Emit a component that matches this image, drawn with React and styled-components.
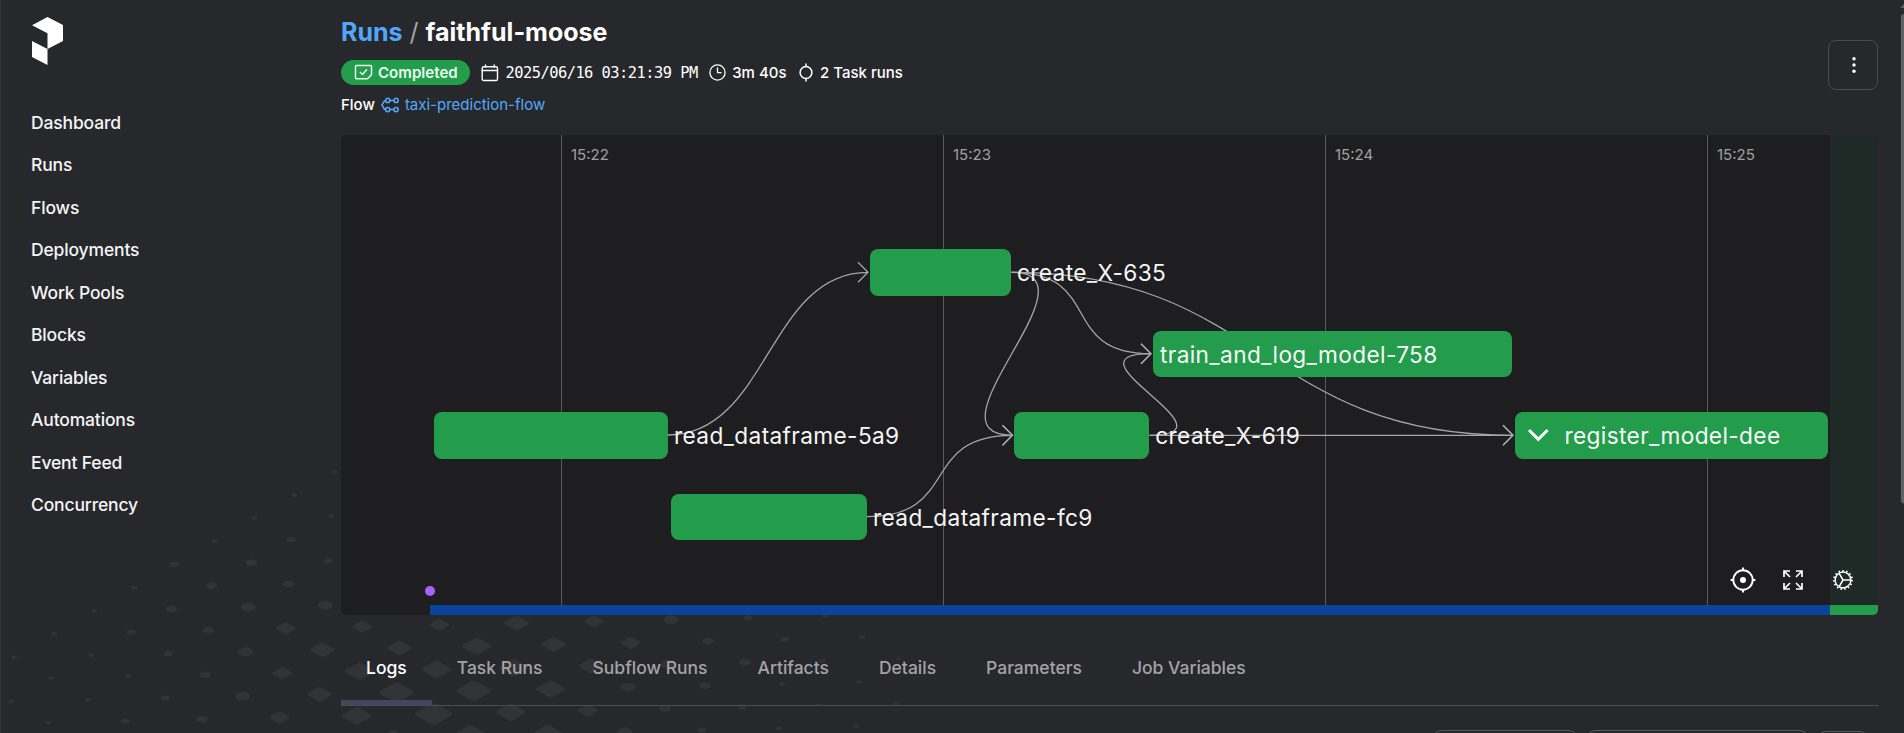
import React from "react";
import styled, { createGlobalStyle, css } from "styled-components";

const c = {
  page: "#27282c",
  canvas: "#1e1e20",
  green: "#239d4c",
  blue: "#0a439b",
  link: "#51a8fb",
  muted: "#a3a3a7",
  rule: "#4b4c50",
  edge: "#a6a6a8",
};

const GlobalStyle = createGlobalStyle`
  *, *::before, *::after { box-sizing: border-box; }
  html, body { margin: 0; height: 100%; overflow: hidden; }
  body { background: ${c.page}; color: #fff; font-family: Inter, "Liberation Sans", sans-serif; }
`;

const Page = styled.div`
  position: relative;
  display: flex;
  width: 100vw;
  height: 100vh;
  overflow: hidden;
  background: ${c.page};
  border-left: 1px solid #323437;
`;

const Pattern = styled.svg`
  position: absolute;
  top: 0;
  left: -1px;
  fill: #323337;
`;

const Sidebar = styled.aside`
  position: relative;
  flex: none;
  width: 320px;
  padding: 17px 30px 0;
`;

const Logo = styled.svg`
  display: block;
  margin-left: 1px;
`;

const Nav = styled.nav`
  display: flex;
  flex-direction: column;
  margin-top: 36.5px;
`;

const NavLink = styled.a`
  height: 42.5px;
  line-height: 42.5px;
  font-size: 17.5px;
  font-weight: 500;
  letter-spacing: -0.15px;
  color: #f5f5f6;
`;

const Main = styled.main`
  position: relative;
  flex: 1;
  min-width: 0;
  display: flex;
  flex-direction: column;
  padding: 17px 26px 0 20px;
`;

const Header = styled.header`
  display: flex;
  align-items: center;
  justify-content: space-between;
  height: 96px;
`;

const HeaderText = styled.div`
  display: flex;
  flex-direction: column;
  height: 100%;
`;

const Title = styled.h1`
  display: flex;
  gap: 7px;
  margin: 0;
  height: 31px;
  line-height: 31px;
  font-size: 25px;
  font-weight: 700;
  letter-spacing: 0;
`;

const Crumb = styled.a`
  color: ${c.link};
`;

const Slash = styled.span`
  color: #a3a3a7;
  font-weight: 400;
`;

const MetaRow = styled.div`
  display: flex;
  align-items: center;
  margin-top: 12px;
  height: 25px;
  gap: 11px;
  font-size: 15px;
  font-weight: 500;
`;

const Badge = styled.span`
  display: flex;
  align-items: center;
  gap: 5px;
  width: 129px;
  height: 25px;
  padding: 0 0 0 13px;
  border-radius: 13px;
  background: ${c.green};
  color: #e9fbef;
  font-size: 15.1px;
  font-weight: 600;
`;

const Meta = styled.span`
  display: flex;
  align-items: center;
  gap: 6.5px;
  white-space: nowrap;
`;

const Stamp = styled.span`
  font: 400 15.4px "DejaVu Sans Mono", monospace;
  letter-spacing: -0.53px;
`;

const FlowRow = styled.div`
  display: flex;
  align-items: center;
  gap: 6px;
  margin-top: 10px;
  height: 20px;
  font-size: 15px;
  font-weight: 500;
`;

const FlowLink = styled.a`
  color: ${c.link};
  font-size: 15px;
  font-weight: 400;
`;

const MenuButton = styled.button`
  display: flex;
  align-items: center;
  justify-content: center;
  width: 50px;
  height: 50px;
  padding: 0 0 0 1px;
  border: 1px solid ${c.rule};
  border-radius: 8px;
  background: transparent;
`;

const Graph = styled.section`
  position: relative;
  flex: none;
  margin-top: 22px;
  height: 480px;
  border-radius: 5px;
  overflow: hidden;
  background: ${c.canvas};
`;

const TimeColumn = styled.div`
  position: absolute;
  top: 0;
  left: ${(p) => p.$x}px;
  height: 470px;
  padding: 10px 0 0 9px;
  border-left: 1px solid #5a595d;
  font-size: 15px;
  line-height: 20px;
  color: #a0a0a3;
`;

const StateBand = styled.div`
  position: absolute;
  top: 0;
  left: 1489px;
  right: 0;
  height: 470px;
  background: #1f2a26;
`;

const StateBar = styled.div`
  position: absolute;
  bottom: 0;
  left: 88.500px;
  right: 0;
  height: 10px;
  display: flex;
`;

const StateSegment = styled.div`
  width: ${(p) => p.$width}px;
  background: ${(p) => p.$color};
`;

const StartMark = styled.div`
  position: absolute;
  left: 84px;
  top: 451px;
  width: 10px;
  height: 10px;
  border-radius: 50%;
  background: #a762fb;
`;

const Edges = styled.svg`
  position: absolute;
  inset: 0;
  fill: none;
  stroke: ${c.edge};
  stroke-width: 1.3;
`;

const Node = styled.div`
  position: absolute;
  left: ${(p) => p.$x}px;
  top: ${(p) => p.$y}px;
  width: ${(p) => p.$width}px;
  height: 46.6px;
  display: flex;
  align-items: center;
  border-radius: 8px;
  background: ${c.green};
`;

const NodeLabel = styled.span`
  flex: none;
  margin-left: 7px;
  padding-top: 1.5px;
  font-size: 22.65px;
  letter-spacing: 0.37px;
  line-height: 30px;
  color: #f7f7f7;
  white-space: nowrap;
  ${(p) =>
    p.$outside &&
    css`
      margin-left: calc(100% + 6px);
    `}
`;

const Chevron = styled.svg`
  flex: none;
  margin: 0 7.5px 0 12px;
`;

const Controls = styled.div`
  position: absolute;
  right: 22px;
  top: 429px;
  display: flex;
  gap: 24px;
`;

const Tabs = styled.div`
  flex: none;
  display: flex;
  align-items: flex-end;
  height: 91px;
  border-bottom: 1px solid ${c.rule};
`;

const Tab = styled.div`
  height: 70px;
  padding: 0 25px;
  line-height: 65px;
  font-size: 17.5px;
  font-weight: 500;
  color: ${(p) => (p.$active ? "#fff" : c.muted)};
  border-bottom: 5px solid ${(p) => (p.$active ? "#45455b" : "transparent")};
`;

const LogToolbar = styled.div`
  display: flex;
  justify-content: flex-end;
  gap: 10px;
  padding: 24px 10px 0 0;
`;

const ToolbarBox = styled.div`
  width: ${(p) => p.$width}px;
  height: 40px;
  margin-top: ${(p) => p.$drop || 0}px;
  border: 1px solid #55565a;
  border-radius: 8px;
`;

const Scrollbar = styled.svg`
  position: absolute;
  right: 0;
  top: 0;
  fill: #616164;
`;

/* Halftone backdrop: each row lists [first column, mark widths...]. */
const HALFTONE = {
  "-7": [3, 6],
  "-6": [2, 6],
  "-5": [1, 6, 6],
  "-4": [0, 6, 9],
  "-3": [-1, 9, 11.6, 9],
  "-2": [-2, 6, 11.6, 11.6],
  "-1": [-3, 6, 11.6, 15, 15],
  0: [-4, 6, 9, 11.6, 20.5, 20.5, 20.5, 25, 20, 15, 9, 6],
  1: [-5, 6, 6, 9, 15, 25, 25, 29.5, 25, 20.5, 11.6, 9, 6],
  2: [-5, 6, 6, 11.6, 20.5, 29.5, 30, 29.5, 25, 15, 11.6, 6, 6],
  3: [-6, 6, 6, 9, 15, 25, 35, 35, 29.5, 15, 11.6, 6, 6, 6],
  4: [-6, 6, 9, 11.6, 20.5, 30, 38, 29.5, 20.5, 11.6, 9, 6, 6, 6],
  5: [-5, 6, 9, 15, 25, 35, 29.5, 15, 9, 6, 6, 6],
};

const marks = Object.entries(HALFTONE).flatMap(([row, [first, ...widths]]) =>
  widths.map((w, k) => ({
    x: 362.5 + (first + k) * 77.1 + row * 37.05,
    y: 626.7 - (first + k) * 1.77 + row * 21.37,
    w,
  }))
);

function Mark({ x, y, w }) {
  if (w < 16) return <ellipse cx={x} cy={y} rx={w / 2} ry={w * 0.285} />;
  const a = w * 0.54;
  const b = w * 0.315;
  const k = 0.16;
  const p = (px, py) => `${(x + px).toFixed(2)} ${(y + py).toFixed(2)}`;
  return (
    <path
      d={`M${p(-a * (1 - k), -b * k)} L${p(-a * k, -b * (1 - k))} Q${p(0, -b)} ${p(a * k, -b * (1 - k))} L${p(a * (1 - k), -b * k)} Q${p(a, 0)} ${p(a * (1 - k), b * k)} L${p(a * k, b * (1 - k))} Q${p(0, b)} ${p(-a * k, b * (1 - k))} L${p(-a * (1 - k), b * k)} Q${p(-a, 0)} ${p(-a * (1 - k), -b * k)}Z`}
    />
  );
}

const NAV = ["Dashboard", "Runs", "Flows", "Deployments", "Work Pools", "Blocks", "Variables", "Automations", "Event Feed", "Concurrency"];
const TABS = ["Logs", "Task Runs", "Subflow Runs", "Artifacts", "Details", "Parameters", "Job Variables"];
const TIMES = [
  [220, "15:22"],
  [602, "15:23"],
  [984, "15:24"],
  [1366, "15:25"],
];
const NODES = [
  { x: 93, y: 277, width: 234, label: "read_dataframe-5a9", outside: true },
  { x: 330, y: 358.5, width: 196, label: "read_dataframe-fc9", outside: true },
  { x: 529, y: 114, width: 141, label: "create_X-635", outside: true },
  { x: 673, y: 277, width: 135.300, label: "create_X-619", outside: true },
  { x: 812, y: 195.5, width: 358.5, label: "train_and_log_model-758" },
  { x: 1174, y: 277, width: 312.5, label: "register_model-dee", expandable: true },
];
const EDGES = [
  [327, 300, 527, 137.3],
  [526, 381.7, 671.5, 300.3],
  [670, 137.3, 671.5, 300.3],
  [670, 137.3, 810, 218.7],
  [670, 137.3, 1172, 300.3],
  [808.5, 300.3, 810, 218.7],
  [808.5, 300.3, 1172, 300.3],
];

function Edge({ from: [x1, y1, x2, y2] }) {
  const reach = Math.max(94, (x2 - x1) / 2);
  return (
    <path
      d={`M${x1} ${y1}C${x1 + reach} ${y1} ${x2 - reach} ${y2} ${x2} ${y2}M${x2 - 10} ${y2 - 10}L${x2} ${y2}L${x2 - 10} ${y2 + 10}`}
    />
  );
}

const line = { fill: "none", stroke: "currentColor", strokeWidth: 1.5, strokeLinecap: "round", strokeLinejoin: "round" };

const CompletedIcon = () => (
  <svg width="19" height="17" viewBox="0 0 19 17" {...line}>
    <path d="M2.5 1.5h14a1 1 0 0 1 1 1v8.2l-4 4h-11a1 1 0 0 1-1-1V2.500a1 1 0 0 1 1-1Z" />
    <path d="M6.300 8.200l2.300 2.300 4-4.700" />
  </svg>
);
const CalendarIcon = () => (
  <svg width="18" height="18" viewBox="0 0 18 18" {...line} strokeWidth="1.4">
    <rect x="1.200" y="2.700" width="15.300" height="13.800" rx="1.600" />
    <path d="M1.200 6.500h15.300M4.500 1v2M13.200 1v2" />
  </svg>
);
const ClockIcon = () => (
  <svg width="17" height="17" viewBox="0 0 17 17" {...line} strokeWidth="1.300">
    <circle cx="8.500" cy="8.500" r="7.600" />
    <path d="M8.500 3.800v4.900h3.500" />
  </svg>
);
const TaskIcon = () => (
  <svg width="16" height="19" viewBox="0 0 16 19" {...line}>
    <circle cx="8" cy="9.500" r="5.900" />
    <path d="M8 1v2.600M8 15.400V18" />
  </svg>
);
const FlowIcon = () => (
  <svg width="18" height="16" viewBox="0 0 18 16" fill="none" stroke={c.link} strokeWidth="1.500">
    <circle cx="6.700" cy="3.400" r="2.100" />
    <circle cx="15.100" cy="3.400" r="2.100" />
    <circle cx="6.700" cy="12.600" r="2.100" />
    <circle cx="15.100" cy="12.600" r="2.100" />
    <path d="M8.800 3.400h4.200M8.800 12.600h4.200M4.600 3.400C1.800 3.600 2.600 8 .200 8 2.600 8 1.800 12.400 4.600 12.600" />
  </svg>
);
const TargetIcon = () => (
  <svg width="26" height="32" viewBox="-13 -16 26 32" fill="none" stroke="#fff" strokeWidth="1.900">
    <circle r="9.700" />
    <circle r="3" fill="#fff" stroke="none" />
    <path d="M0-12.400V-9M0 12.400V9M-12.400 0H-9M12.400 0H9" />
  </svg>
);
const ExpandIcon = () => (
  <svg width="26" height="32" viewBox="-13 -16 26 32" fill="none" stroke="#fff" strokeWidth="1.700">
    <path d="M-3-3L-9-9M3-3L9-9M-3 3L-9 9M3 3L9 9M-9-3V-9H-3M3-9H9V-3M-9 3V9H-3M3 9H9V3" />
  </svg>
);
const GearIcon = () => (
  <svg width="26" height="32" viewBox="-13 -16 26 32" fill="none" stroke="#fff" strokeWidth="1.500">
    <circle r="7.900" />
    <circle r="9.200" strokeWidth="1.700" strokeDasharray="1.500 2.353" />
    <path d="M8 0H0L-4-6.900M0 0L-4 6.900" />
  </svg>
);

export default function App() {
  return (
    <Page>
      <GlobalStyle />
      <Pattern width="900" height="733" viewBox="0 0 900 733">
        {marks.map((m) => (
          <Mark key={`${m.x}-${m.y}`} {...m} />
        ))}
      </Pattern>
      <Sidebar>
        <Logo width="31" height="48" viewBox="0 0 31 48" fill="#fff">
          <path d="M0 8.300 15.500 0 31 8v16L15.500 32V16.300ZM0 24l15.500 8v16L0 40Z" />
        </Logo>
        <Nav>
          {NAV.map((label) => (
            <NavLink key={label}>{label}</NavLink>
          ))}
        </Nav>
      </Sidebar>
      <Main>
        <Header>
          <HeaderText>
            <Title>
              <Crumb>Runs</Crumb>
              <Slash>/</Slash>
              <span>faithful-moose</span>
            </Title>
            <MetaRow>
              <Badge>
                <CompletedIcon />
                Completed
              </Badge>
              <Meta>
                <CalendarIcon />
                <Stamp>2025/06/16 03:21:39 PM</Stamp>
              </Meta>
              <Meta>
                <ClockIcon />
                3m 40s
              </Meta>
              <Meta>
                <TaskIcon />
                2 Task runs
              </Meta>
            </MetaRow>
            <FlowRow>
              Flow
              <FlowIcon />
              <FlowLink>taxi-prediction-flow</FlowLink>
            </FlowRow>
          </HeaderText>
          <MenuButton aria-label="Run menu">
            <svg width="4" height="18" viewBox="0 0 4 18" fill="#fff">
              <circle cx="2" cy="2.800" r="1.700" />
              <circle cx="2" cy="9" r="1.700" />
              <circle cx="2" cy="15.200" r="1.700" />
            </svg>
          </MenuButton>
        </Header>
        <Graph>
          <StateBand />
          {TIMES.map(([x, label]) => (
            <TimeColumn key={label} $x={x}>
              {label}
            </TimeColumn>
          ))}
          <Edges width="1537" height="480">
            {EDGES.map((e) => (
              <Edge key={e.join()} from={e} />
            ))}
          </Edges>
          {NODES.map((n) => (
            <Node key={n.label} $x={n.x} $y={n.y} $width={n.width}>
              {n.expandable && (
                <Chevron width="23" height="16" viewBox="0 0 23 16" fill="none" stroke="#fff" strokeWidth="3">
                  <path d="M2 3l9.300 9.300L20.600 3" />
                </Chevron>
              )}
              <NodeLabel $outside={n.outside}>{n.label}</NodeLabel>
            </Node>
          ))}
          <StartMark />
          <StateBar>
            <StateSegment $width={1400.5} $color={c.blue} />
            <StateSegment $width={48} $color={c.green} />
          </StateBar>
          <Controls>
            <TargetIcon />
            <ExpandIcon />
            <GearIcon />
          </Controls>
        </Graph>
        <Tabs>
          {TABS.map((label, i) => (
            <Tab key={label} $active={i === 0}>
              {label}
            </Tab>
          ))}
        </Tabs>
        <LogToolbar>
          <ToolbarBox $width={144} />
          <ToolbarBox $width={221} />
          <ToolbarBox $width={50} $drop={1} />
        </LogToolbar>
      </Main>
      <Scrollbar width="4" height="733" viewBox="0 0 4 733">
        <path d="M0 8 4 4V8Z" />
        <path d="M4 14v489.500a3 3 0 0 1-3-3V17a3 3 0 0 1 3-3Z" />
      </Scrollbar>
    </Page>
  );
}
